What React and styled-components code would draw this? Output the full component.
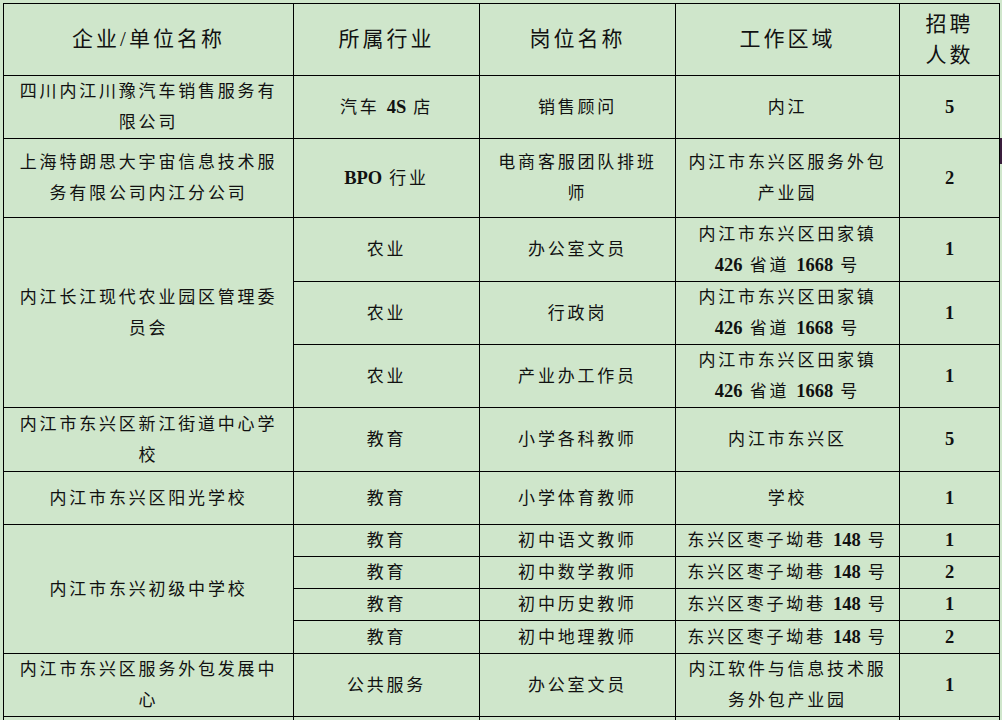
import React from 'react';
import styled, { createGlobalStyle } from 'styled-components';

const GlobalStyle = createGlobalStyle`
  html, body {
    margin: 0;
    padding: 0;
    background: #cfe6cb;
    overflow: hidden;
  }
`;

const Page = styled.div`
  position: relative;
  padding: 3px 0 0 3px;
  width: 1002px;
  height: 720px;
  box-sizing: border-box;
  overflow: hidden;
  background: #cfe6cb;
  font-family: "Liberation Serif", "Noto Sans CJK SC", serif;
  color: #111;
`;

const Table = styled.table`
  width: 996px;
  table-layout: fixed;
  border-collapse: collapse;
  background: #cfe6cb;
`;

const Row = styled.tr`
  height: ${p => p.$h}px;
`;

const Head = styled.th`
  border: 1.5px solid #000;
  font-size: 21px;
  font-weight: 400;
  letter-spacing: 3px;
  line-height: 31px;
  text-align: center;
  vertical-align: middle;
  padding: 0 4px;
`;

const Cell = styled.td`
  border: 1.5px solid #000;
  letter-spacing: ${p => (p.$count ? 0 : 2.8)}px;
  font-weight: ${p => (p.$count ? 700 : 400)};
  font-size: ${p => (p.$count ? 18.5 : 17)}px;
  line-height: 31px;
  text-align: center;
  vertical-align: middle;
  padding: 0 4px;
  white-space: nowrap;
`;

const Num = styled.span`
  font-size: 18.5px;
  font-weight: 700;
  letter-spacing: 0;
`;

const EdgeMark = styled.div`
  position: absolute;
  left: 1000px;
  top: 138px;
  width: 3px;
  height: 26px;
  background: #3b1f3d;
`;

const Lines = ({ text }) =>
  text.split('\n').map((line, i, arr) => (
    <React.Fragment key={i}>
      {line.split(/(\d+[A-Z]?|BPO)/).map((part, j) =>
        /\d|BPO/.test(part) ? <Num key={j}>{part}</Num> : part
      )}
      {i < arr.length - 1 && <br />}
    </React.Fragment>
  ));

const area426 = '内江市东兴区田家镇\n426 省道 1668 号';
const zaozi = '东兴区枣子坳巷 148 号';

const App = () => (
  <Page>
    <GlobalStyle />
    <Table>
      <colgroup>
        <col style={{ width: 290 }} />
        <col style={{ width: 186 }} />
        <col style={{ width: 196 }} />
        <col style={{ width: 224 }} />
        <col style={{ width: 100 }} />
      </colgroup>
      <tbody>
        <Row $h={72}>
          <Head>企业/单位名称</Head>
          <Head>所属行业</Head>
          <Head>岗位名称</Head>
          <Head>工作区域</Head>
          <Head>招聘<br />人数</Head>
        </Row>
        <Row $h={63}>
          <Cell><Lines text={'四川内江川豫汽车销售服务有\n限公司'} /></Cell>
          <Cell><Lines text="汽车 4S 店" /></Cell>
          <Cell>销售顾问</Cell>
          <Cell>内江</Cell>
          <Cell $count>5</Cell>
        </Row>
        <Row $h={79}>
          <Cell><Lines text={'上海特朗思大宇宙信息技术服\n务有限公司内江分公司'} /></Cell>
          <Cell><Lines text="BPO 行业" /></Cell>
          <Cell><Lines text={'电商客服团队排班\n师'} /></Cell>
          <Cell><Lines text={'内江市东兴区服务外包\n产业园'} /></Cell>
          <Cell $count>2</Cell>
        </Row>
        <Row $h={64}>
          <Cell rowSpan={3}><Lines text={'内江长江现代农业园区管理委\n员会'} /></Cell>
          <Cell>农业</Cell>
          <Cell>办公室文员</Cell>
          <Cell><Lines text={area426} /></Cell>
          <Cell $count>1</Cell>
        </Row>
        <Row $h={63}>
          <Cell>农业</Cell>
          <Cell>行政岗</Cell>
          <Cell><Lines text={area426} /></Cell>
          <Cell $count>1</Cell>
        </Row>
        <Row $h={63}>
          <Cell>农业</Cell>
          <Cell>产业办工作员</Cell>
          <Cell><Lines text={area426} /></Cell>
          <Cell $count>1</Cell>
        </Row>
        <Row $h={64}>
          <Cell><Lines text={'内江市东兴区新江街道中心学\n校'} /></Cell>
          <Cell>教育</Cell>
          <Cell>小学各科教师</Cell>
          <Cell>内江市东兴区</Cell>
          <Cell $count>5</Cell>
        </Row>
        <Row $h={53}>
          <Cell>内江市东兴区阳光学校</Cell>
          <Cell>教育</Cell>
          <Cell>小学体育教师</Cell>
          <Cell>学校</Cell>
          <Cell $count>1</Cell>
        </Row>
        <Row $h={32}>
          <Cell rowSpan={4}>内江市东兴初级中学校</Cell>
          <Cell>教育</Cell>
          <Cell>初中语文教师</Cell>
          <Cell><Lines text={zaozi} /></Cell>
          <Cell $count>1</Cell>
        </Row>
        <Row $h={32}>
          <Cell>教育</Cell>
          <Cell>初中数学教师</Cell>
          <Cell><Lines text={zaozi} /></Cell>
          <Cell $count>2</Cell>
        </Row>
        <Row $h={32}>
          <Cell>教育</Cell>
          <Cell>初中历史教师</Cell>
          <Cell><Lines text={zaozi} /></Cell>
          <Cell $count>1</Cell>
        </Row>
        <Row $h={33}>
          <Cell>教育</Cell>
          <Cell>初中地理教师</Cell>
          <Cell><Lines text={zaozi} /></Cell>
          <Cell $count>2</Cell>
        </Row>
        <Row $h={63}>
          <Cell><Lines text={'内江市东兴区服务外包发展中\n心'} /></Cell>
          <Cell>公共服务</Cell>
          <Cell>办公室文员</Cell>
          <Cell><Lines text={'内江软件与信息技术服\n务外包产业园'} /></Cell>
          <Cell $count>1</Cell>
        </Row>
        <Row $h={63}>
          <Cell />
          <Cell />
          <Cell />
          <Cell />
          <Cell />
        </Row>
      </tbody>
    </Table>
    <EdgeMark />
  </Page>
);

export default App;
